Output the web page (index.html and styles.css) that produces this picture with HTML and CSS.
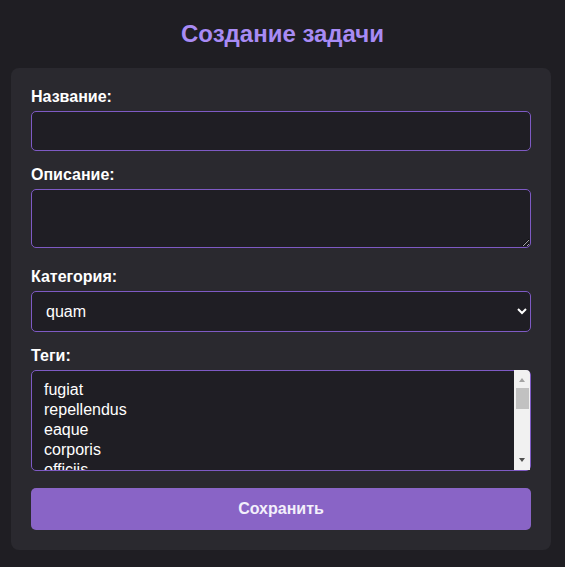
FILE: index.html
```html
<!DOCTYPE html>
<html lang="ru">
<head>
<meta charset="utf-8">
<title>Создание задачи</title>
<link rel="stylesheet" href="styles.css">
</head>
<body>
<h2 class="page-title">Создание задачи</h2>
<form class="card">
  <div class="field">
    <label class="label" for="name">Название:</label>
    <input class="control" id="name" type="text">
  </div>
  <div class="field">
    <label class="label" for="desc">Описание:</label>
    <textarea class="control area" id="desc"></textarea>
  </div>
  <div class="field">
    <label class="label" for="cat">Категория:</label>
    <select class="control select" id="cat">
      <option>quam</option>
    </select>
  </div>
  <div class="field">
    <label class="label" for="tags">Теги:</label>
    <div class="multi-wrap">
      <select class="control multi" id="tags" multiple>
        <option>fugiat</option>
        <option>repellendus</option>
        <option>eaque</option>
        <option>corporis</option>
        <option>officiis</option>
        <option>dolorem</option>
        <option>natus</option>
        <option>voluptas</option>
        <option>ipsum</option>
        <option>magnam</option>
        <option>tempora</option>
        <option>aliquid</option>
        <option>sequi</option>
        <option>minima</option>
        <option>quia</option>
      </select>
      <div class="scrollbar" aria-hidden="true">
        <div class="sb-btn"><span class="tri-up"></span></div>
        <div class="sb-thumb"></div>
        <div class="sb-track"></div>
        <div class="sb-btn"><span class="tri-down"></span></div>
      </div>
    </div>
  </div>
  <button class="save" type="button">Сохранить</button>
</form>
</body>
</html>
```
FILE: styles.css
```css
html, body {
  margin: 0;
  background: #1f1e23;
}
body {
  padding: 0 11px 17px;
  font-family: "Liberation Sans", Arial, sans-serif;
  color: #ffffff;
}
.page-title {
  margin: 0;
  padding-top: 20px;
  height: 68px;
  box-sizing: border-box;
  text-align: center;
  font-size: 24px;
  font-weight: bold;
  line-height: 28px;
  color: #a88bf4;
}
.card {
  width: 540px;
  box-sizing: border-box;
  background: #2a292f;
  border-radius: 8px;
  padding: 20px;
  display: flex;
  flex-direction: column;
}
.field {
  display: flex;
  flex-direction: column;
  margin-bottom: 15px;
}
.label {
  font-size: 16px;
  font-weight: bold;
  line-height: 18px;
  margin-bottom: 5px;
  color: #ffffff;
}
.control {
  box-sizing: border-box;
  width: 100%;
  background: #1f1e24;
  border: 1px solid #7e5ac4;
  border-radius: 5px;
  color: #ffffff;
  font-family: "Liberation Sans", Arial, sans-serif;
  font-size: 16px;
  padding: 10px;
  margin: 0;
  height: 40px;
  outline: none;
}
.area {
  height: 59px;
  resize: vertical;
  margin-bottom: 5px;
}
.select {
  height: 41px;
  padding: 10px;
}
.multi-wrap {
  position: relative;
  height: 101px;
  margin-bottom: 2px;
}
.multi {
  display: block;
  height: 101px;
  padding: 10px 0 10px 10px;
  overflow: hidden;
}
.multi option {
  height: 20px;
  line-height: 20px;
  padding: 0 2px;
  min-height: 0;
  box-sizing: border-box;
  color: #ffffff;
}
.scrollbar {
  position: absolute;
  top: 0;
  bottom: 1px;
  right: 1px;
  width: 16px;
  background: #f1f1f1;
  display: flex;
  flex-direction: column;
  border-top-right-radius: 4px;
}
.sb-btn {
  height: 17px;
  flex: none;
  display: flex;
  justify-content: center;
  align-items: center;
}
.tri-up {
  width: 0;
  height: 0;
  border-left: 3.5px solid transparent;
  border-right: 3.5px solid transparent;
  border-bottom: 4px solid #a3a3a3;
  margin-top: 2px;
}
.tri-down {
  width: 0;
  height: 0;
  border-left: 3.5px solid transparent;
  border-right: 3.5px solid transparent;
  border-top: 4px solid #505050;
  margin-bottom: 3px;
}
.sb-thumb {
  flex: none;
  height: 21px;
  margin: 1px 1px 0 2px;
  background: #c1c1c1;
}
.sb-track {
  flex: 1;
}
.save {
  height: 42px;
  border: none;
  border-radius: 5px;
  background: #8964c6;
  color: #f3f0fb;
  font-family: "Liberation Sans", Arial, sans-serif;
  font-size: 16px;
  font-weight: bold;
  cursor: pointer;
}
```
